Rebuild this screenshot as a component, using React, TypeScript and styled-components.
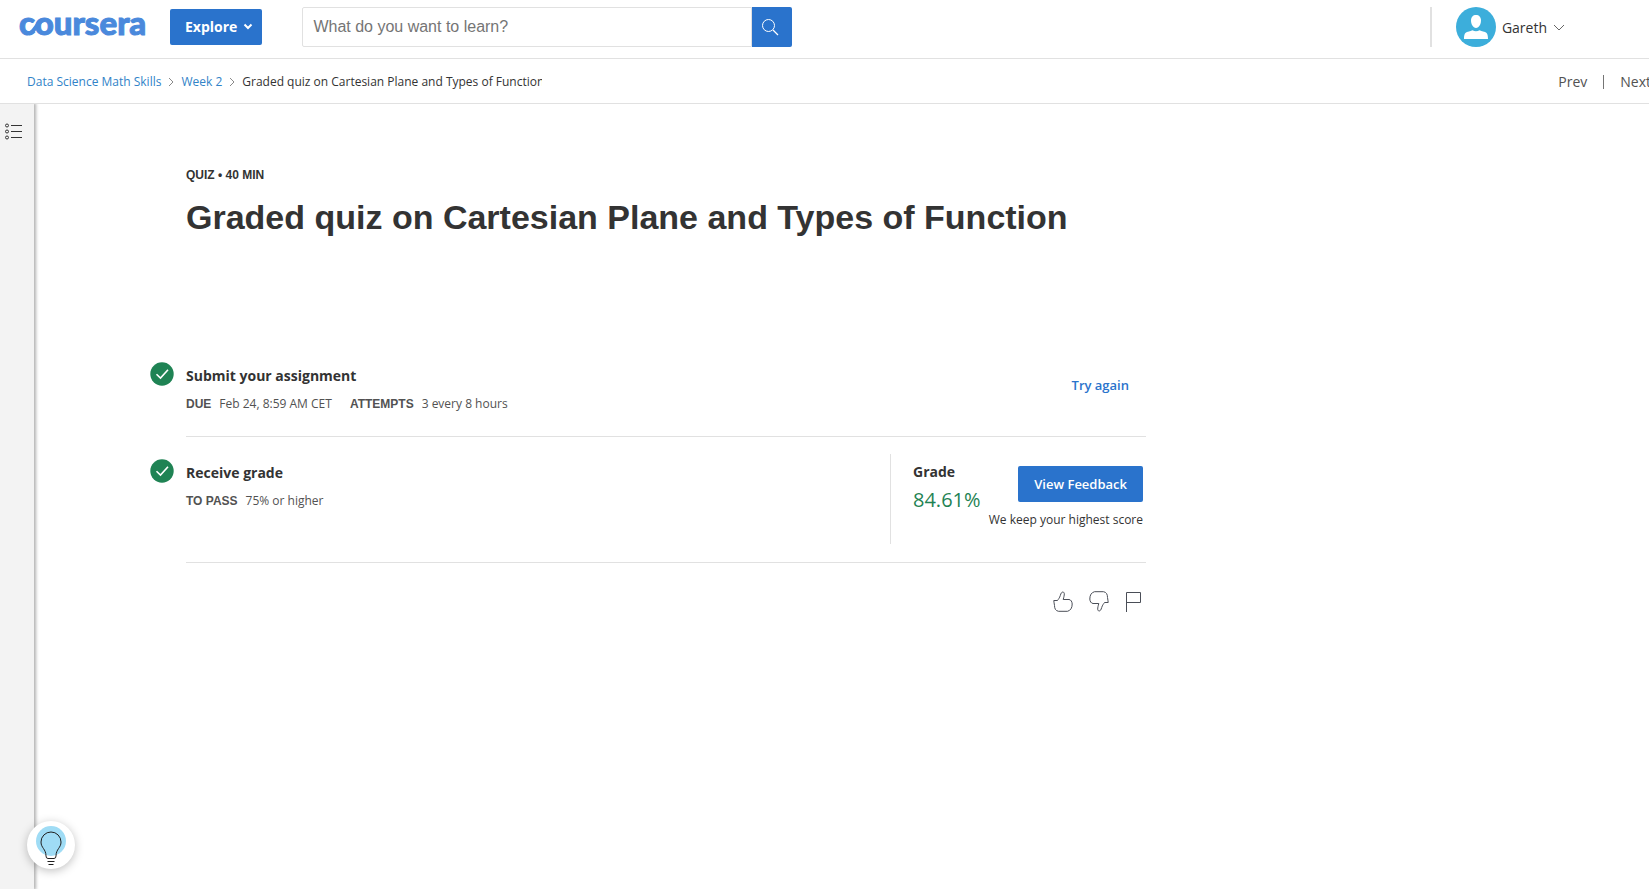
import React from "react";
import styled, { createGlobalStyle, css } from "styled-components";

const GlobalStyle = createGlobalStyle`
  *, *::before, *::after { box-sizing: border-box; }
  html, body, #root { height: 100%; }
  body {
    margin: 0;
    background: #fff;
    color: #333;
    font-family: "Open Sans", sans-serif;
    font-size: 14px;
    line-height: 20px;
    overflow-x: hidden;
  }
  h1, h2, h3, p, dl, dd, ol { margin: 0; padding: 0; }
  button { font-family: inherit; cursor: pointer; }
  a { text-decoration: none; }
  svg { display: block; flex: none; }
`;

const Page = styled.div`
  display: flex;
  flex-direction: column;
  min-height: 100vh;
`;

const Header = styled.header`
  display: flex;
  align-items: center;
  height: 59px;
  padding: 0 84px 4px 18px;
  border-bottom: 1px solid #e1e1e1;
`;

const LogoLink = styled.a`
  margin-right: 20px;
`;

const ExploreButton = styled.button`
  display: flex;
  align-items: center;
  gap: 6px;
  height: 36px;
  margin-right: 40px;
  padding: 0 9px 2px 15px;
  border: 0;
  border-radius: 2px;
  background: #2a73cc;
  color: #fff;
  font-size: 14px;
  font-weight: 700;
`;

const SearchForm = styled.form`
  display: flex;
  flex: 0 1 490px;
  height: 40px;
`;

const SearchInput = styled.input`
  flex: 1;
  min-width: 0;
  padding: 0 10px;
  border: 1px solid #e1e1e1;
  border-radius: 2px 0 0 2px;
  color: #333;
  font-family: "Liberation Sans", Arial, sans-serif;
  font-size: 16px;
  &::placeholder { color: #757575; opacity: 1; }
`;

const SearchButton = styled.button`
  display: flex;
  align-items: center;
  width: 40px;
  padding: 0 10px;
  border: 0;
  border-radius: 0 2px 2px 0;
  background: #2a73cc;
`;

const Account = styled.div`
  display: flex;
  align-items: center;
  height: 40px;
  margin-left: auto;
  padding-left: 24px;
  border-left: 2px solid #e1e1e1;
`;

const AccountButton = styled.button`
  display: flex;
  align-items: center;
  gap: 6px;
  padding: 0;
  border: 0;
  background: none;
  color: #333;
  font-size: 14px;
`;

const SubHeader = styled.div`
  display: flex;
  align-items: center;
  justify-content: space-between;
  height: 45px;
  padding: 2px 0 0 27px;
  border-bottom: 1px solid #e1e1e1;
`;

const Crumbs = styled.ol`
  display: flex;
  align-items: center;
  list-style: none;
  font-size: 12px;
`;

const Crumb = styled.li<{ $current?: boolean }>`
  display: flex;
  align-items: center;
  white-space: nowrap;
  ${(p) =>
    p.$current &&
    css`
      width: 300px;
      overflow: hidden;
    `}
`;

const CrumbLink = styled.a`
  color: #3183c8;
`;

const CrumbArrow = styled.svg`
  margin: 0 7px;
`;

const Pager = styled.nav`
  display: flex;
  align-items: center;
  gap: 16px;
  margin-right: -2px;
`;

const PagerLink = styled.a`
  color: #525252;
  font-size: 14px;
`;

const PagerDivider = styled.span`
  width: 1px;
  height: 14px;
  background: #757575;
`;

const Body = styled.div`
  display: flex;
  flex: 1;
`;

const Rail = styled.aside`
  width: 34px;
  padding: 19px 5px;
  background: #f3f3f3;
  box-shadow: 1px 0 3px 1px rgba(0, 0, 0, 0.3);
  clip-path: inset(0 -6px 0 0);
`;

const IconButton = styled.button`
  display: block;
  padding: 0;
  border: 0;
  background: none;
  line-height: 0;
`;

const Main = styled.main`
  flex: 0 1 996px;
  margin-left: 116px;
  padding: 61px 0 40px;
`;

const TitleBlock = styled.div`
  padding-left: 36px;
  margin-bottom: 123px;
  font-family: "Liberation Sans", Arial, sans-serif;
  font-weight: 700;
`;

const Kicker = styled.p`
  margin-bottom: 10px;
  font-size: 12px;
  line-height: 20px;
`;

const Title = styled.h1`
  font-size: 34px;
  line-height: 44px;
`;

const Step = styled.section`
  display: flex;
`;

const StepIcon = styled.div`
  width: 36px;
`;

const StepBody = styled.div<{ $tall?: boolean }>`
  display: flex;
  flex: 1;
  justify-content: space-between;
  min-height: ${(p) => (p.$tall ? 104 : 75)}px;
  margin-bottom: ${(p) => (p.$tall ? 0 : 22)}px;
  border-bottom: 1px solid #e1e1e1;
`;

const StepText = styled.div`
  padding-top: 4px;
`;

const StepTitle = styled.h2`
  font-size: 14px;
  line-height: 20px;
  font-weight: 700;
`;

const Facts = styled.dl`
  display: flex;
  gap: 18px;
  margin-top: 8px;
  color: #525252;
  font-size: 12px;
`;

const Fact = styled.div`
  display: flex;
  gap: 8px;
`;

const FactName = styled.dt`
  font-family: "Liberation Sans", Arial, sans-serif;
  font-weight: 700;
`;

const TextButton = styled.button`
  align-self: flex-start;
  margin: 12px 11px 0 0;
  border: 0;
  background: none;
  color: #2a73cc;
  font-size: 13px;
  line-height: 20px;
  font-weight: 600;
`;

const GradePanel = styled.div`
  display: flex;
  justify-content: space-between;
  align-self: flex-start;
  width: 256px;
  height: 90px;
  margin-top: -5px;
  padding: 8px 3px 0 22px;
  border-left: 1px solid #e1e1e1;
`;

const GradeValue = styled.p`
  margin-top: 4px;
  color: #1f8354;
  font-size: 20px;
  line-height: 28px;
`;

const FeedbackColumn = styled.div`
  display: flex;
  flex-direction: column;
  align-items: flex-end;
  gap: 8px;
  padding-top: 4px;
  font-size: 12px;
  line-height: 20px;
`;

const PrimaryButton = styled.button`
  height: 36px;
  padding: 0 16px;
  border: 0;
  border-radius: 2px;
  background: #2a73cc;
  color: #fff;
  font-size: 13px;
  font-weight: 600;
`;

const Reactions = styled.div`
  display: flex;
  justify-content: flex-end;
  gap: 16px;
  padding: 28px 4px 0 0;
`;

const HintButton = styled.button`
  position: fixed;
  left: 27px;
  bottom: 20px;
  width: 48px;
  height: 48px;
  padding: 0;
  border: 0;
  border-radius: 50%;
  background: #fff;
  box-shadow: 0 2px 10px rgba(0, 0, 0, 0.25);
`;

const Logo = () => (
  <svg width="132" height="50" viewBox="0 0 132 50" role="img" aria-label="Coursera">
    <text
      x="1"
      y="33"
      fill="#4a89dc"
      stroke="#4a89dc"
      strokeWidth="1"
      fontFamily="Lato, sans-serif"
      fontWeight="900"
      fontSize="33"
    >
      coursera
    </text>
    <path d="M11 31.500C17 30.500 19 19 26 18" fill="none" stroke="#4a89dc" strokeWidth="4" />
  </svg>
);

const Avatar = () => (
  <svg width="40" height="40" viewBox="0 0 40 40" aria-hidden="true">
    <circle cx="20" cy="20" r="20" fill="#3caedb" />
    <path d="M20 8c3 0 5 2 5 5.500s-2 7.500-5 7.500-5-4-5-7.500S17 8 20 8z" fill="#fff" />
    <path d="M8 32c0-5 1-6.500 4-7.300 2-.5 3.500-.9 4.500-1.400 2 1.200 5 1.200 7 0 1 .5 2.500.9 4.500 1.400 3 .8 4 2.300 4 7.300z" fill="#fff" />
  </svg>
);

const Done = () => (
  <svg width="24" height="24" viewBox="0 0 24 24" role="img" aria-label="Completed">
    <circle cx="12" cy="12" r="11.700" fill="#1f8354" />
    <path d="M6.500 12.200l4 3.900 7.500-8.300" fill="none" stroke="#fff" strokeWidth="1.600" />
  </svg>
);

const Arrow = () => (
  <CrumbArrow width="6" height="10" viewBox="0 0 6 10" aria-hidden="true">
    <path d="M1 1l4 4-4 4" fill="none" stroke="#8a8a8a" />
  </CrumbArrow>
);

const thumb =
  "M.8 9.500H4.500C5.500 8 6.500 7 7.300 4.500C8 2 8.700 1 10 1C11.800 1.500 11.600 3.500 10.200 8.500H16C18 8.800 19 10.500 19.200 13C19.200 17 17.500 19.500 14.500 20.300H5.500C2.500 19.800 1.500 17.500 1.500 14.500C1.300 12.500 .8 11 .8 9.500Z";

export default function App() {
  return (
    <Page>
      <GlobalStyle />
      <Header>
        <LogoLink href="#">
          <Logo />
        </LogoLink>
        <ExploreButton type="button">
          Explore
          <svg width="10" height="8" viewBox="0 0 10 8" aria-hidden="true">
            <path d="M1.500 2.500l3.500 3.500 3.500-3.500" fill="none" stroke="#fff" strokeWidth="2" />
          </svg>
        </ExploreButton>
        <SearchForm role="search">
          <SearchInput type="text" placeholder="What do you want to learn?" aria-label="Search" />
          <SearchButton type="button" aria-label="Submit search">
            <svg width="17" height="17" viewBox="0 0 17 17" aria-hidden="true">
              <circle cx="6.500" cy="6.500" r="6" fill="none" stroke="#fff" />
              <path d="M11 11l5 5" stroke="#fff" strokeWidth="1.300" />
            </svg>
          </SearchButton>
        </SearchForm>
        <Account>
          <AccountButton type="button">
            <Avatar />
            Gareth
            <svg width="12" height="8" viewBox="0 0 12 8" aria-hidden="true">
              <path d="M1 2l5 5 5-5" fill="none" stroke="#666" />
            </svg>
          </AccountButton>
        </Account>
      </Header>
      <SubHeader>
        <nav aria-label="Breadcrumb">
          <Crumbs>
            <Crumb>
              <CrumbLink href="#">Data Science Math Skills</CrumbLink>
              <Arrow />
            </Crumb>
            <Crumb>
              <CrumbLink href="#">Week 2</CrumbLink>
              <Arrow />
            </Crumb>
            <Crumb $current>Graded quiz on Cartesian Plane and Types of Function</Crumb>
          </Crumbs>
        </nav>
        <Pager aria-label="Course items">
          <PagerLink href="#">Prev</PagerLink>
          <PagerDivider />
          <PagerLink href="#">Next</PagerLink>
        </Pager>
      </SubHeader>
      <Body>
        <Rail>
          <IconButton type="button" aria-label="Show course outline">
            <svg width="18" height="18" viewBox="0 0 18 18" aria-hidden="true">
              <g fill="none" stroke="#333">
                <circle cx="2" cy="2.500" r="1.500" />
                <circle cx="2" cy="8.500" r="1.500" />
                <circle cx="2" cy="14.500" r="1.500" />
                <path d="M6 2.500h11M6 8.500h11M6 14.500h11" />
              </g>
            </svg>
          </IconButton>
        </Rail>
        <Main>
          <TitleBlock>
            <Kicker>QUIZ • 40 MIN</Kicker>
            <Title>Graded quiz on Cartesian Plane and Types of Function</Title>
          </TitleBlock>
          <Step>
            <StepIcon>
              <Done />
            </StepIcon>
            <StepBody>
              <StepText>
                <StepTitle>Submit your assignment</StepTitle>
                <Facts>
                  <Fact>
                    <FactName>DUE</FactName>
                    <dd>Feb 24, 8:59 AM CET</dd>
                  </Fact>
                  <Fact>
                    <FactName>ATTEMPTS</FactName>
                    <dd>3 every 8 hours</dd>
                  </Fact>
                </Facts>
              </StepText>
              <TextButton type="button">Try again</TextButton>
            </StepBody>
          </Step>
          <Step>
            <StepIcon>
              <Done />
            </StepIcon>
            <StepBody $tall>
              <StepText>
                <StepTitle>Receive grade</StepTitle>
                <Facts>
                  <Fact>
                    <FactName>TO PASS</FactName>
                    <dd>75% or higher</dd>
                  </Fact>
                </Facts>
              </StepText>
              <GradePanel>
                <div>
                  <StepTitle as="h3">Grade</StepTitle>
                  <GradeValue>84.61%</GradeValue>
                </div>
                <FeedbackColumn>
                  <PrimaryButton type="button">View Feedback</PrimaryButton>
                  <p>We keep your highest score</p>
                </FeedbackColumn>
              </GradePanel>
            </StepBody>
          </Step>
          <Reactions>
            <IconButton type="button" aria-label="Like">
              <svg width="20" height="21" viewBox="0 0 20 21" aria-hidden="true">
                <path d={thumb} fill="none" stroke="#4a4e57" />
              </svg>
            </IconButton>
            <IconButton type="button" aria-label="Dislike">
              <svg width="20" height="21" viewBox="0 0 20 21" aria-hidden="true">
                <path d={thumb} transform="rotate(180 10 10.500)" fill="none" stroke="#4a4e57" />
              </svg>
            </IconButton>
            <IconButton type="button" aria-label="Report a problem">
              <svg width="17" height="21" viewBox="0 0 17 21" aria-hidden="true">
                <path d="M1.500 21V1.500h14v10h-14" fill="none" stroke="#4a4e57" />
              </svg>
            </IconButton>
          </Reactions>
        </Main>
      </Body>
      <HintButton type="button" aria-label="Hints">
        <svg width="48" height="48" viewBox="0 0 48 48" aria-hidden="true">
          <circle cx="24" cy="20" r="15" fill="#9fdcf5" />
          <g fill="none" stroke="#1f1f1f">
            <path d="M19 35c0-7-5-8-5-14a10 10 0 0 1 20 0c0 6-5 7-5 14q0 2.500-2 2.500h-6q-2 0-2-2.500z" />
            <path d="M20.500 40.500h7M21.500 43.500h5" />
          </g>
        </svg>
      </HintButton>
    </Page>
  );
}
